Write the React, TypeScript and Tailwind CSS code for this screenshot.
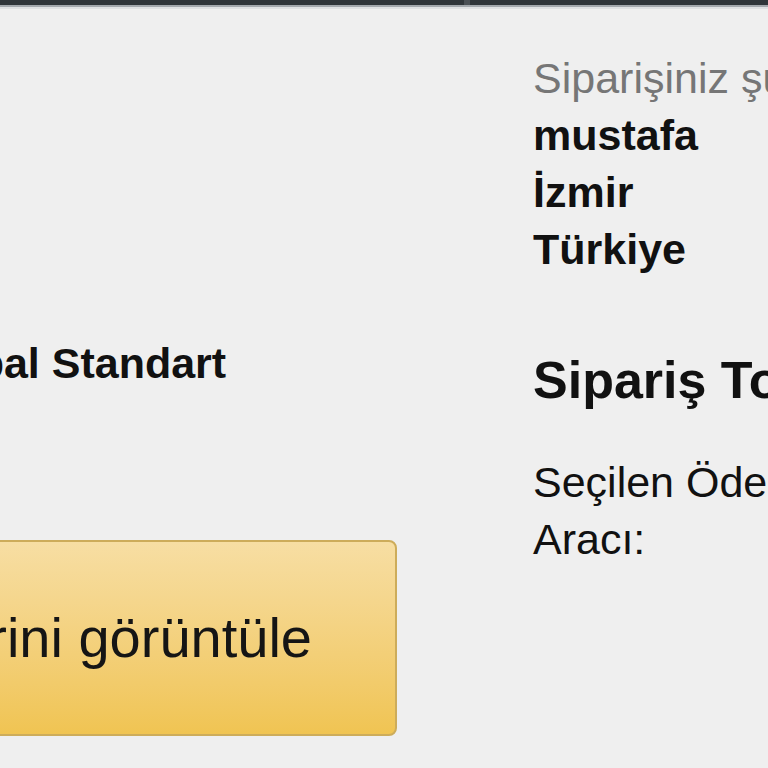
export default function App() {
  return (
    <div className="min-h-screen bg-[#efefef] overflow-hidden font-['Liberation_Sans',Arial,sans-serif] text-[#111]">
      {/* top nav edge */}
      <div className="flex h-[5px] bg-[#2f353a]">
        <div className="w-[464px]" />
        <div className="w-[6px] bg-[#4a5055]" />
      </div>
      <div className="h-[2px] bg-[#a3a8ad]" />
      <div className="h-[2px] bg-[#dfe1e3]" />

      <div className="flex gap-[136px]">
        {/* left column, cut off by the viewport */}
        <div className="ml-[-120px] w-[517px] shrink-0">
          <div className="pt-[326px] pl-[26px] text-[43px] leading-[57px] font-bold whitespace-nowrap">
            Global Standart
          </div>
          <button className="mt-[148px] w-full h-[196px] flex items-center justify-end pr-[83px] rounded-[8px] border-2 border-[#cdac5a] bg-gradient-to-b from-[#f7dea3] to-[#f0c452] text-[56px] text-[#151515] whitespace-nowrap">
            Sipariş bilgilerini görüntüle
          </button>
        </div>

        {/* right column */}
        <div className="shrink-0 text-[43px] leading-[57px] whitespace-nowrap">
          <div className="pt-[41px]">
            <p className="text-[#767676]">Siparişiniz şu adrese gönderilecek:</p>
            <p className="font-bold">mustafa</p>
            <p className="font-bold">İzmir</p>
            <p className="font-bold">Türkiye</p>
          </div>
          <h2 className="mt-[70px] text-[52px] leading-[64px] font-bold">Sipariş Toplamı</h2>
          <p className="mt-[42px]">
            Seçilen Ödeme
            <br />
            Aracı:
          </p>
        </div>
      </div>
    </div>
  );
}
